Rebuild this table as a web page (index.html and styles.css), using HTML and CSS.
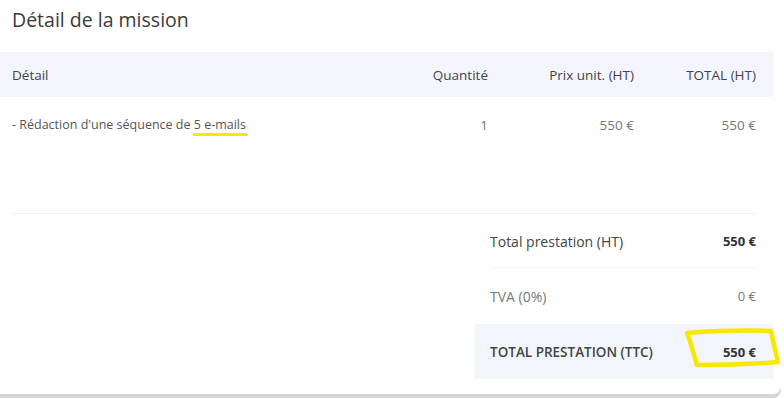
FILE: index.html
```html
<!DOCTYPE html>
<html lang="fr">
<head>
<meta charset="utf-8">
<title>Détail de la mission</title>
<link rel="stylesheet" href="styles.css">
</head>
<body>
<div class="card">
  <h2 class="title">Détail de la mission</h2>
  <div class="grid head">
    <div>Détail</div>
    <div class="num">Quantité</div>
    <div class="num">Prix unit. (HT)</div>
    <div class="num">TOTAL (HT)</div>
  </div>
  <div class="grid item">
    <div class="desc">- Rédaction d'une séquence de <span class="mark">5 e-mails</span></div>
    <div class="num">1</div>
    <div class="num">550 €</div>
    <div class="num">550 €</div>
  </div>
  <div class="sep"></div>
  <div class="totals">
    <div class="trow strong-val">
      <span class="lbl">Total prestation (HT)</span>
      <span class="val">550 €</span>
    </div>
    <div class="trow light">
      <span class="lbl">TVA (0%)</span>
      <span class="val">0 €</span>
    </div>
    <div class="trow final">
      <span class="lbl">TOTAL PRESTATION (TTC)</span>
      <span class="val">550 €</span>
      <svg class="circle" width="96" height="42" viewBox="0 0 96 42" aria-hidden="true">
        <path d="M3 5 C 30 3, 60 2, 87 3 C 89 13, 91 23, 94 34 C 70 36, 40 37, 13 37 C 10 27, 7 15, 3 5 Z" fill="none" stroke="#f8e800" stroke-width="4.5" stroke-linejoin="round"/>
      </svg>
    </div>
  </div>
</div>
</body>
</html>
```
FILE: styles.css
```css
html, body {
  margin: 0;
  padding: 0;
  background: #ffffff;
}
body {
  font-family: "Open Sans", "Noto Sans", sans-serif;
  color: #444;
  width: 784px;
  height: 398px;
  overflow: hidden;
}
.card {
  width: 781px;
  height: 394px;
  background: #fff;
  border-bottom-right-radius: 8px;
  box-shadow: 0 4px 0 #d6d6d6;
  position: relative;
}
.title {
  margin: 0;
  padding: 6px 12px 0;
  height: 45px;
  box-sizing: border-box;
  font-size: 19.5px;
  line-height: 27px;
  font-weight: 400;
  color: #3a3a3a;
}
.grid {
  display: grid;
  grid-template-columns: 1fr 100px 146px 122px;
  width: 774px;
  box-sizing: border-box;
  padding: 0 18px 0 12px;
  align-items: center;
}
.head {
  margin-top: 7px;
  height: 45px;
  background: #f4f5fc;
  font-size: 13.5px;
  color: #444;
}
.num {
  text-align: right;
}
.item {
  padding-top: 19px;
  line-height: 18px;
  font-size: 13.5px;
  color: #777;
}
.desc {
  font-size: 12.5px;
  color: #555;
}
.mark {
  position: relative;
}
.mark::after {
  content: "";
  position: absolute;
  left: -1px;
  right: -2px;
  bottom: -3px;
  height: 3px;
  border-radius: 2px;
  background: #f8e800;
}
.sep {
  margin: 79px 0 0 12px;
  width: 744px;
  height: 1px;
  background: #f2f3f6;
}
.totals {
  margin-left: 474px;
  width: 300px;
  display: flex;
  flex-direction: column;
}
.trow {
  display: flex;
  justify-content: space-between;
  align-items: center;
  font-size: 14px;
  padding: 0 18px 0 16px;
  height: 54px;
  position: relative;
}
.strong-val {
  color: #444;
}
.strong-val .lbl {
  font-weight: 500;
}
.strong-val .val {
  font-weight: 700;
  font-size: 13px;
  color: #333;
}
.strong-val::after {
  content: "";
  position: absolute;
  left: 16px;
  right: 18px;
  bottom: 0;
  height: 1px;
  background: #f2f3f6;
}
.light {
  height: 56px;
  color: #777;
}
.light .val {
  font-size: 13px;
}
.final {
  height: 55px;
  background: #f3f5fc;
  border-radius: 4px;
  color: #444;
  font-weight: 600;
}
.final .lbl {
  font-size: 13.5px;
}
.final .val {
  font-weight: 700;
  font-size: 13px;
  color: #333;
}
.circle {
  position: absolute;
  left: 210px;
  top: 4px;
}
```
